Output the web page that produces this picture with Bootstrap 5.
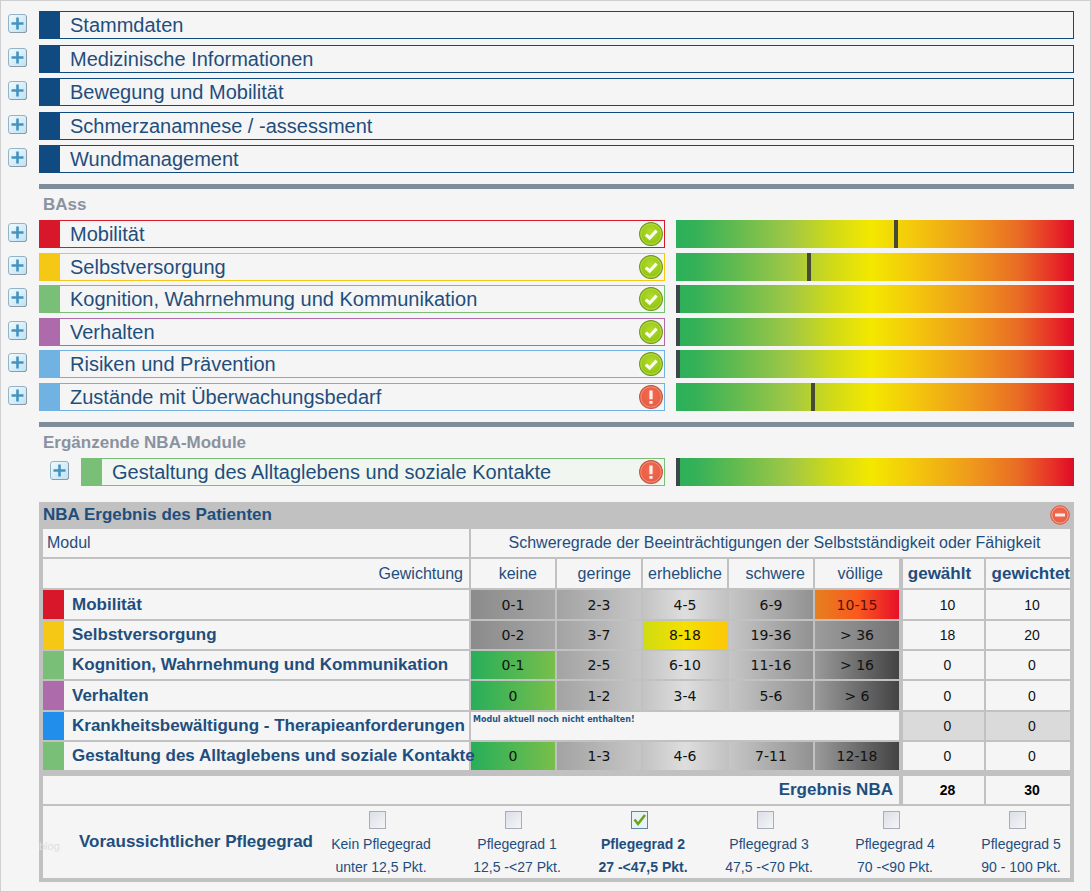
<!DOCTYPE html>
<html lang="de">
<head>
<meta charset="utf-8">
<meta name="viewport" content="width=device-width, initial-scale=1">
<title>NBA Ergebnis des Patienten</title>
<link href="https://cdn.jsdelivr.net/npm/bootstrap@5.3.0/dist/css/bootstrap.min.css" rel="stylesheet">
<style>
  :root { --ink: #1f4e7d; --line: #c1c1c1; --paper: #f5f5f5; }
  body { background: var(--paper); color: var(--ink); font-family: "Liberation Sans", Arial, sans-serif; font-size: 16px; line-height: 20px; }
  .page { min-height: 100vh; border: 1px solid #cfcfd1; padding: 10px 16px 9px 7px; }
  .svg-defs { width: 0; height: 0; }
  .topics { min-height: 162px; }
  .modules { min-height: 191px; }
  .split { display: grid; grid-template-columns: 657fr 398fr; column-gap: 11px; }
  .line-item { gap: 11px; }
  .inset-item { padding-left: 42px; }
  .expander { width: 20px; height: 20px; margin-bottom: 2px; }
  .expander svg, .closer svg { display: block; width: 100%; height: 100%; }
  .topic-box { --tone: #0f4a80; height: 28px; border: 1px solid var(--tone); border-left: 21px solid var(--tone); padding: 0 1px 0 10px; font-size: 20px; line-height: 26px; min-width: 0; }
  .state { width: 24px; height: 24px; flex: none; }
  .red { --tone: #d8182a; } .yellow { --tone: #f5c816; } .green { --tone: #7abf78; }
  .purple { --tone: #ad6bab; } .sky { --tone: #70b3e2; } .blue { --tone: #218eec; }
  .pale { background: #f1f7f0; }
  .scale { height: 28px; background: linear-gradient(90deg, #2bb05a 0%, #35b158 5%, #9dc746 28%, #d3db16 40%, #f4e800 49%, #f3c70c 60%, #ef9a1c 74%, #e96c24 86%, #e73529 94%, #e31026 99%, #cf1328 100%); }
  .needle { top: 0; width: 4px; height: 28px; background: #464a33; }
  .needle-zero { background: #3b4748; }
  .divider { height: 5px; background: #7f8d9b; margin: 11px 0 6px 31px; }
  .group-title { font-size: 17px; line-height: 20px; font-weight: 700; color: #8a929f; margin: 0 0 5px 35px; }
  .result { margin-left: 31px; background: var(--line); padding: 0 2px 2px; }
  .result-head { height: 25px; padding: 0 2px; }
  .result-head h2 { font-size: 17px; line-height: 24px; font-weight: 700; margin: 0; }
  .closer { width: 20px; height: 20px; }
  .grid-table { width: 100%; table-layout: fixed; border-collapse: separate; border-spacing: 2px; }
  .grid-table th, .grid-table td { padding: 0; height: 28px; background: var(--paper); text-align: center; font-weight: 400; white-space: nowrap; }
  .grid-table .tall > * { height: 29px; }
  .num-col { width: 84px; }
  .sum-col { width: 83px; }
  .grid-table th.to-end { text-align: right; padding-right: 6px; }
  .grid-table th.level { text-align: right; padding-right: 10px; }
  .grid-table th.level-mid { padding-right: 18px; }
  .grid-table th.level-wide { text-align: center; }
  .grid-table th.to-start { text-align: left; padding-left: 4px; }
  .grid-table th.strong, .grid-table tbody th { font-size: 17px; font-weight: 700; }
  .grid-table tbody th { text-align: left; border-left: 21px solid var(--tone); padding-left: 8px; }
  .grid-table .sum-edge { border-left: 2px solid var(--line); }
  .grid-table td.sum-edge { padding-left: 8px; }
  .grid-table tbody td { font-size: 14px; color: #111; }
  .grid-table td.range { font-family: "DejaVu Sans", Verdana, sans-serif; }
  .grid-table td.r1 { background: linear-gradient(90deg, #8b8b8b, #a6a6a6); }
  .grid-table td.r2 { background: linear-gradient(90deg, #a3a3a3, #c6c6c6); }
  .grid-table td.r3 { background: linear-gradient(90deg, #c3c3c3, #dedede 50%, #c2c2c2); }
  .grid-table td.r4 { background: linear-gradient(90deg, #c6c6c6, #929292); }
  .grid-table td.r5 { background: linear-gradient(90deg, #9a9a9a, #434343); }
  .grid-table td.r5-soft { background: linear-gradient(90deg, #9c9c9c, #747474); }
  .grid-table td.hit-low { background: linear-gradient(90deg, #27ae5a, #78bf4b); }
  .grid-table td.hit-mid { background: linear-gradient(90deg, #cfdb12, #f5e000 50%, #fcc808); }
  .grid-table td.hit-high { background: linear-gradient(90deg, #e5801f, #fa5a1e 50%, #e61129); color: #5a0f08; }
  .grid-table td.muted-sum { background: #dadada; }
  .grid-table td.notice { font: 700 8px/12px "DejaVu Sans", Verdana, sans-serif; color: #285482; text-align: left; vertical-align: top; padding: 2px 0 0 2px; }
  .grid-table tfoot tr:first-child > * { border-top: 4px solid var(--line); height: 32px; }
  .grid-table tfoot td { font-size: 14px; font-weight: 700; color: #000; }
  .grid-table tfoot .grades { color: var(--ink); font-weight: 400; height: 72px; }
  .grades fieldset { height: 72px; }
  .grades-title { font-size: 17px; font-weight: 700; padding-left: 36px; }
  .grade-grid { display: grid; grid-template-columns: 118px repeat(5, 98px); column-gap: 28px; line-height: 23px; }
  .grade-grid label { display: block; }
  .tick { appearance: none; display: block; width: 17px; height: 18px; margin: 5px auto 4px; border: 1px solid #a9adb6; background: linear-gradient(135deg, #dcdfe8, #f4f5f8); position: relative; left: -4px; }
  .tick:checked { border-color: #5b88a8; background: #e9f2f4 url("data:image/svg+xml,%3Csvg xmlns='http://www.w3.org/2000/svg' viewBox='0 0 15 16'%3E%3Cpath d='M2.5 7.5 6 12 13 3' fill='none' stroke='%236da321' stroke-width='2.6'/%3E%3C/svg%3E") center / contain no-repeat; }
  .credit { left: -4px; top: 30px; font-size: 11px; line-height: 20px; color: #dedede; }
</style>
</head>
<body>
<svg class="svg-defs position-absolute" aria-hidden="true">
  <defs>
    <linearGradient id="gPlus" x1="0" y1="0" x2="1" y2="1"><stop offset="0" stop-color="#f2fafd"/><stop offset="1" stop-color="#bfe2f4"/></linearGradient>
    <radialGradient id="gOk" cx=".5" cy=".4" r=".6"><stop offset="0" stop-color="#b2dc2c"/><stop offset="1" stop-color="#8ec210"/></radialGradient>
    <radialGradient id="gBad" cx=".5" cy=".4" r=".6"><stop offset="0" stop-color="#f26a50"/><stop offset="1" stop-color="#e65c45"/></radialGradient>
  </defs>
  <symbol id="plus" viewBox="0 0 20 20">
    <rect x=".5" y=".5" width="18" height="18" rx="2.5" fill="url(#gPlus)" stroke="#93b4c8"/>
    <path d="M2 18.5h16M18.5 2v16" stroke="#8a949c" stroke-width=".8" fill="none"/>
    <path d="M3.5 9.5h12M9.5 3.5v12" stroke="#4593bf" stroke-width="2.6" fill="none"/>
  </symbol>
  <symbol id="ok" viewBox="0 0 24 24">
    <circle cx="12" cy="12" r="11.4" fill="url(#gOk)" stroke="#6f9628" stroke-width="1.1"/>
    <circle cx="12" cy="12" r="10.2" fill="none" stroke="#c0e04e" stroke-width=".8"/>
    <path d="M6.8 12.6 10.6 16 17.6 8.6" fill="none" stroke="#fbfff0" stroke-width="3.2"/>
  </symbol>
  <symbol id="bad" viewBox="0 0 24 24">
    <circle cx="12" cy="12" r="11.4" fill="url(#gBad)" stroke="#c0583f" stroke-width="1.1"/>
    <circle cx="12" cy="12" r="10.2" fill="none" stroke="#f79b85" stroke-width=".8"/>
    <path d="M10.4 5.5h3.2v8.8h-3.2zM10.4 16h3.2v2.8h-3.2z" fill="#fdeee8"/>
  </symbol>
  <symbol id="minus" viewBox="0 0 20 20">
    <circle cx="10" cy="10" r="9.3" fill="url(#gBad)" stroke="#d9604a"/>
    <circle cx="10" cy="10" r="8.1" fill="none" stroke="#f8a692"/>
    <rect x="5" y="8.5" width="10" height="3" fill="#fbe9e4"/>
  </symbol>
</svg>

<main class="page">
  <section class="topics d-flex flex-column justify-content-between">
    <div class="line-item d-flex align-items-center"><button type="button" class="expander btn p-0 border-0" aria-label="Stammdaten öffnen"><svg><use href="#plus"/></svg></button><div class="topic-box flex-fill">Stammdaten</div></div>
    <div class="line-item d-flex align-items-center"><button type="button" class="expander btn p-0 border-0" aria-label="Medizinische Informationen öffnen"><svg><use href="#plus"/></svg></button><div class="topic-box flex-fill">Medizinische Informationen</div></div>
    <div class="line-item d-flex align-items-center"><button type="button" class="expander btn p-0 border-0" aria-label="Bewegung und Mobilität öffnen"><svg><use href="#plus"/></svg></button><div class="topic-box flex-fill">Bewegung und Mobilität</div></div>
    <div class="line-item d-flex align-items-center"><button type="button" class="expander btn p-0 border-0" aria-label="Schmerzanamnese öffnen"><svg><use href="#plus"/></svg></button><div class="topic-box flex-fill">Schmerzanamnese / -assessment</div></div>
    <div class="line-item d-flex align-items-center"><button type="button" class="expander btn p-0 border-0" aria-label="Wundmanagement öffnen"><svg><use href="#plus"/></svg></button><div class="topic-box flex-fill">Wundmanagement</div></div>
  </section>

  <div class="divider"></div>
  <h2 class="group-title">BAss</h2>

  <section class="modules d-flex flex-column justify-content-between">
    <div class="split">
      <div class="line-item d-flex align-items-center"><button type="button" class="expander btn p-0 border-0" aria-label="Mobilität öffnen"><svg><use href="#plus"/></svg></button><div class="topic-box red flex-fill d-flex justify-content-between align-items-center"><span>Mobilität</span><svg class="state"><use href="#ok"/></svg></div></div>
      <div class="scale position-relative"><span class="needle position-absolute" style="left:54.7%"></span></div>
    </div>
    <div class="split">
      <div class="line-item d-flex align-items-center"><button type="button" class="expander btn p-0 border-0" aria-label="Selbstversorgung öffnen"><svg><use href="#plus"/></svg></button><div class="topic-box yellow flex-fill d-flex justify-content-between align-items-center"><span>Selbstversorgung</span><svg class="state"><use href="#ok"/></svg></div></div>
      <div class="scale position-relative"><span class="needle position-absolute" style="left:32.9%"></span></div>
    </div>
    <div class="split">
      <div class="line-item d-flex align-items-center"><button type="button" class="expander btn p-0 border-0" aria-label="Kognition öffnen"><svg><use href="#plus"/></svg></button><div class="topic-box green flex-fill d-flex justify-content-between align-items-center"><span>Kognition, Wahrnehmung und Kommunikation</span><svg class="state"><use href="#ok"/></svg></div></div>
      <div class="scale position-relative"><span class="needle needle-zero position-absolute" style="left:0%"></span></div>
    </div>
    <div class="split">
      <div class="line-item d-flex align-items-center"><button type="button" class="expander btn p-0 border-0" aria-label="Verhalten öffnen"><svg><use href="#plus"/></svg></button><div class="topic-box purple flex-fill d-flex justify-content-between align-items-center"><span>Verhalten</span><svg class="state"><use href="#ok"/></svg></div></div>
      <div class="scale position-relative"><span class="needle needle-zero position-absolute" style="left:0%"></span></div>
    </div>
    <div class="split">
      <div class="line-item d-flex align-items-center"><button type="button" class="expander btn p-0 border-0" aria-label="Risiken und Prävention öffnen"><svg><use href="#plus"/></svg></button><div class="topic-box sky flex-fill d-flex justify-content-between align-items-center"><span>Risiken und Prävention</span><svg class="state"><use href="#ok"/></svg></div></div>
      <div class="scale position-relative"><span class="needle needle-zero position-absolute" style="left:0%"></span></div>
    </div>
    <div class="split">
      <div class="line-item d-flex align-items-center"><button type="button" class="expander btn p-0 border-0" aria-label="Zustände mit Überwachungsbedarf öffnen"><svg><use href="#plus"/></svg></button><div class="topic-box sky flex-fill d-flex justify-content-between align-items-center"><span>Zustände mit Überwachungsbedarf</span><svg class="state"><use href="#bad"/></svg></div></div>
      <div class="scale position-relative"><span class="needle position-absolute" style="left:33.9%"></span></div>
    </div>
  </section>

  <div class="divider"></div>
  <h2 class="group-title">Ergänzende NBA-Module</h2>

  <section class="split">
    <div class="line-item inset-item d-flex align-items-center"><button type="button" class="expander btn p-0 border-0" aria-label="Gestaltung des Alltaglebens öffnen"><svg><use href="#plus"/></svg></button><div class="topic-box green pale flex-fill d-flex justify-content-between align-items-center"><span>Gestaltung des Alltaglebens und soziale Kontakte</span><svg class="state"><use href="#bad"/></svg></div></div>
    <div class="scale position-relative"><span class="needle needle-zero position-absolute" style="left:0%"></span></div>
  </section>

  <section class="result mt-3">
    <div class="result-head d-flex justify-content-between align-items-center">
      <h2>NBA Ergebnis des Patienten</h2>
      <button type="button" class="closer btn p-0 border-0" aria-label="Ergebnis schließen"><svg><use href="#minus"/></svg></button>
    </div>
    <table class="grid-table">
      <colgroup><col><col class="num-col"><col class="num-col"><col class="num-col"><col class="num-col"><col class="num-col"><col class="sum-col"><col class="num-col"></colgroup>
      <thead>
        <tr><th class="to-start" scope="col">Modul</th><th colspan="7" scope="colgroup" class="ps-2">Schweregrade der Beeinträchtigungen der Selbstständigkeit oder Fähigkeit</th></tr>
        <tr class="tall"><th class="to-end" scope="col">Gewichtung</th><th class="level level-mid" scope="col">keine</th><th class="level" scope="col">geringe</th><th class="level level-wide p-0" scope="col">erhebliche</th><th class="level pe-2" scope="col">schwere</th><th class="level pe-3" scope="col">völlige</th><th class="strong sum-edge pe-2" scope="col">gewählt</th><th class="strong to-end pe-0" scope="col">gewichtet</th></tr>
      </thead>
      <tbody>
        <tr class="tall"><th class="red" scope="row">Mobilität</th><td class="range r1">0-1</td><td class="range r2">2-3</td><td class="range r3">4-5</td><td class="range r4">6-9</td><td class="range hit-high">10-15</td><td class="sum-edge">10</td><td class="ps-2">10</td></tr>
        <tr><th class="yellow" scope="row">Selbstversorgung</th><td class="range r1">0-2</td><td class="range r2">3-7</td><td class="range hit-mid">8-18</td><td class="range r4">19-36</td><td class="range r5-soft">&gt; 36</td><td class="sum-edge">18</td><td class="ps-2">20</td></tr>
        <tr><th class="green" scope="row">Kognition, Wahrnehmung und Kommunikation</th><td class="range hit-low">0-1</td><td class="range r2">2-5</td><td class="range r3">6-10</td><td class="range r4">11-16</td><td class="range r5">&gt; 16</td><td class="sum-edge">0</td><td class="ps-2">0</td></tr>
        <tr class="tall"><th class="purple" scope="row">Verhalten</th><td class="range hit-low">0</td><td class="range r2">1-2</td><td class="range r3">3-4</td><td class="range r4">5-6</td><td class="range r5">&gt; 6</td><td class="sum-edge">0</td><td class="ps-2">0</td></tr>
        <tr><th class="blue" scope="row">Krankheitsbewältigung - Therapieanforderungen</th><td class="notice" colspan="5">Modul aktuell noch nicht enthalten!</td><td class="sum-edge muted-sum">0</td><td class="muted-sum ps-2">0</td></tr>
        <tr><th class="green" scope="row">Gestaltung des Alltaglebens und soziale Kontakte</th><td class="range hit-low">0</td><td class="range r2">1-3</td><td class="range r3">4-6</td><td class="range r4">7-11</td><td class="range r5">12-18</td><td class="sum-edge">0</td><td class="ps-2">0</td></tr>
      </tbody>
      <tfoot>
        <tr><th class="strong to-end" colspan="6" scope="row">Ergebnis NBA</th><td class="sum-edge">28</td><td class="ps-2">30</td></tr>
        <tr><td class="grades" colspan="8">
          <fieldset class="d-flex justify-content-between align-items-center position-relative" aria-labelledby="gradeTitle">
            <span class="credit position-absolute">blog</span>
            <div class="grades-title" id="gradeTitle">Voraussichtlicher Pflegegrad</div>
            <div class="grade-grid align-self-start">
              <label><input class="tick" type="checkbox">Kein Pflegegrad<br>unter 12,5 Pkt.</label>
              <label><input class="tick" type="checkbox">Pflegegrad 1<br>12,5 -&lt;27 Pkt.</label>
              <label class="fw-bold"><input class="tick" type="checkbox" checked>Pflegegrad 2<br>27 -&lt;47,5 Pkt.</label>
              <label><input class="tick" type="checkbox">Pflegegrad 3<br>47,5 -&lt;70 Pkt.</label>
              <label><input class="tick" type="checkbox">Pflegegrad 4<br>70 -&lt;90 Pkt.</label>
              <label><input class="tick" type="checkbox">Pflegegrad 5<br>90 - 100 Pkt.</label>
            </div>
          </fieldset>
        </td></tr>
      </tfoot>
    </table>
  </section>
</main>
<script src="https://cdn.jsdelivr.net/npm/bootstrap@5.3.0/dist/js/bootstrap.bundle.min.js"></script>
</body>
</html>
